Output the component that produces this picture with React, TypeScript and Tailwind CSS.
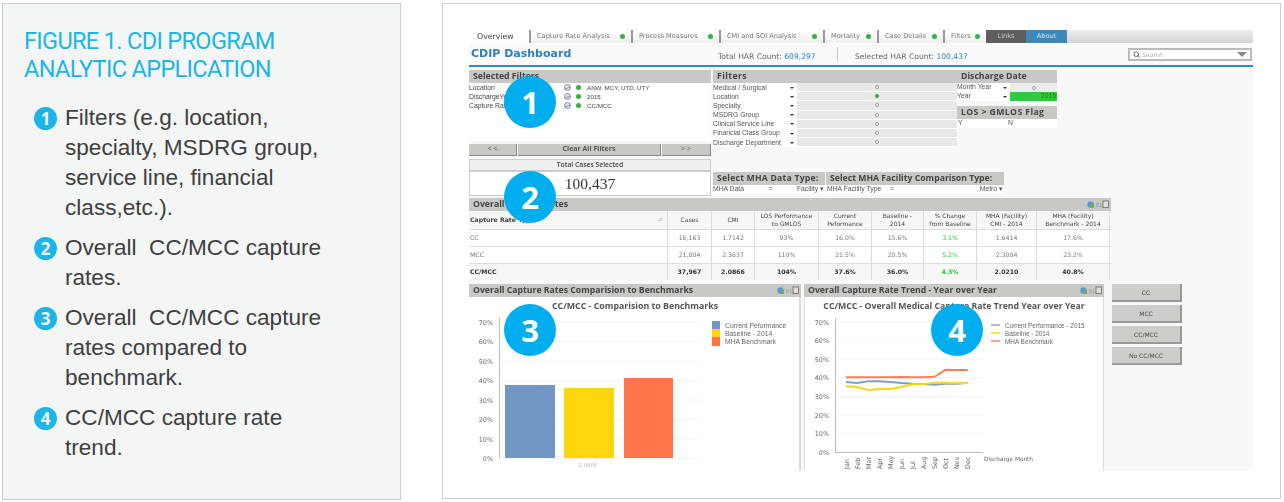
import { Search } from "lucide-react";

const notes = [
  { n: 1, lines: ["Filters (e.g. location,", "specialty, MSDRG group,", "service line, financial", "class,etc.)."] },
  { n: 2, lines: ["Overall\u00a0 CC/MCC capture", "rates."] },
  { n: 3, lines: ["Overall\u00a0 CC/MCC capture", "rates compared to", "benchmark."] },
  { n: 4, lines: ["CC/MCC capture rate", "trend."] },
];

const tabs = [
  { label: "Capture Rate Analysis", w: "w-[102px]" },
  { label: "Process Measures", w: "w-[88px]" },
  { label: "CMI and SOI Analysis", w: "w-[104px]" },
  { label: "Mortality", w: "w-[54px]" },
  { label: "Case Details", w: "w-[66px]" },
  { label: "Filters", w: "w-[43px]" },
];

const selected = [
  ["Location", "ANW, MCY, UTD, UTY"],
  ["DischargeYear", "2015"],
  ["Capture Rate Type", "CC/MCC"],
];

const filters = [
  "Medical / Surgical",
  "Location",
  "Specialty",
  "MSDRG Group",
  "Clinical Service Line",
  "Financial Class Group",
  "Discharge Department",
];

const head = [
  ["Cases"],
  ["CMI"],
  ["LOS Performance", "to GMLOS"],
  ["Current", "Peformance"],
  ["Baseline -", "2014"],
  ["% Change", "from Baseline"],
  ["MHA (Facility)", "CMI - 2014"],
  ["MHA (Facility)", "Benchmark - 2014"],
];

const rows = [
  ["CC", "16,163", "1.7142", "93%", "16.0%", "15.6%", "3.1%", "1.6414", "17.6%"],
  ["MCC", "21,804", "2.3637", "110%", "21.5%", "20.5%", "5.2%", "2.3084", "23.2%"],
  ["CC/MCC", "37,967", "2.0866", "104%", "37.6%", "36.0%", "4.3%", "2.0210", "40.8%"],
];

const months = ["Jan", "Feb", "Mar", "Apr", "May", "Jun", "Jul", "Aug", "Sep", "Oct", "Nov", "Dec"];

const trend = [
  { color: "#7f9fcb", ys: [306, 309, 304, 304, 306, 309, 311, 312, 314, 311, 311, 308] },
  { color: "#fdd60d", ys: [319, 321, 330, 327, 327, 321, 313, 312, 308, 308, 310, 309] },
  { color: "#ff7d52", ys: [292, 292, 292, 292, 292, 291, 292, 292, 290, 269, 270, 270] },
];

const linePoints = (ys: number[]) =>
  ys.map((y, i) => `${41 + i * 11.07},${(y / 3 + 280 - 297).toFixed(1)}`).join(" ");

function Badge({ n, className }: { n: number; className: string }) {
  return (
    <div
      className={`absolute flex h-[52px] w-[52px] items-center justify-center rounded-full bg-[#00aeef] font-['Open_Sans',sans-serif] text-[31px] font-bold text-white ${className}`}
    >
      {n}
    </div>
  );
}

function GreyHead({
  title,
  icons,
  className = "",
  textClass = "",
}: {
  title: string;
  icons?: boolean;
  className?: string;
  textClass?: string;
}) {
  return (
    <div className={`flex h-[13px] items-center justify-between bg-[#c8c8c7] pl-[4px] pr-[2px] ${className}`}>
      <span className={`font-['Open_Sans',sans-serif] text-[8.7px] font-bold whitespace-nowrap text-[#444] ${textClass}`}>{title}</span>
      {icons && <HeadIcons />}
    </div>
  );
}

function HeadIcons() {
  return (
    <svg width="22" height="9" viewBox="0 0 22 9" className="shrink-0">
      <circle cx="3.5" cy="4.5" r="3.2" fill="#5b9bd0" />
      <path d="M3 5l4-1 0 4-3 0z" fill="#6cb33f" />
      <text x="8.5" y="7" fontSize="6" fill="#999" fontFamily="Liberation Sans">XL</text>
      <rect x="16" y="1" width="5.5" height="6.5" fill="#ddd" stroke="#666" strokeWidth="0.8" />
    </svg>
  );
}

function Dot() {
  return <span className="h-[5px] w-[5px] shrink-0 rounded-full bg-[#2fb344]" />;
}

function Caret() {
  return <span className="h-0 w-0 border-x-[2px] border-t-[2px] border-x-transparent border-t-[#333]" />;
}

function TopBars() {
  return (
    <>
      <div className="flex h-[13px] items-stretch bg-gradient-to-b from-[#eeeeee] to-[#d4d4d4] font-['DejaVu_Sans',sans-serif] text-[6.6px] text-[#777]">
        <div className="flex w-[60px] items-center bg-white pl-[8px] text-[7.8px] text-[#444]">Overview</div>
        {tabs.map((t) => (
          <div
            key={t.label}
            className={`flex items-center justify-between border-l-2 border-[#999] bg-gradient-to-b from-white to-[#f0f0f0] pl-[6px] pr-[6px] ${t.w}`}
          >
            <span className="whitespace-nowrap">{t.label}</span>
            <Dot />
          </div>
        ))}
        <div className="flex w-[40px] items-center justify-center bg-[#5e5e5e] text-[#ccc]">Links</div>
        <div className="flex w-[41px] items-center justify-center bg-[#3c88bb] text-[#d8e8f2]">About</div>
      </div>
      <div className="flex h-[22px] items-center bg-[#fafafa] font-['DejaVu_Sans',sans-serif] text-[7.6px] text-[#666]">
        <span className="ml-[2px] w-[247px] pt-[1px] text-[11px] font-bold text-[#2c80bd]">CDIP Dashboard</span>
        <span className="w-[119px] pt-[5px] whitespace-nowrap">
          Total HAR Count: <span className="text-[#2c80bd]">609,297</span>
        </span>
        <span className="h-[14px] w-[18px] border-l border-[#ccc]" />
        <span className="w-[273px] pt-[5px] whitespace-nowrap">
          Selected HAR Count: <span className="text-[#2c80bd]">100,437</span>
        </span>
        <div className="flex h-[13px] w-[124px] items-center justify-between border-2 border-[#bbb] bg-white px-[3px] text-[6px] text-[#aaa] italic">
          <span className="flex items-center gap-[2px]">
            <Search size={7} strokeWidth={3} className="text-[#555]" />
            Search
          </span>
          <span className="h-0 w-0 border-x-[5px] border-t-[5px] border-x-transparent border-t-[#888]" />
        </div>
      </div>
      <div className="h-[2px] bg-[#2b8ccc]" />
    </>
  );
}

function LeftColumn() {
  return (
    <div className="flex w-[242px] flex-col">
      <GreyHead title="Selected Filters" />
      <div className="h-[58px] bg-white font-['Liberation_Sans',sans-serif] text-[6.8px] text-[#444]">
        {selected.map(([k, v]) => (
          <div key={k} className="flex h-[9.2px] items-center">
            <span className="w-[95px] whitespace-nowrap">{k}</span>
            <svg width="7" height="7" viewBox="0 0 7 7" className="mr-[5px]">
              <circle cx="3.5" cy="3.5" r="3" fill="#dfe7ef" stroke="#667" strokeWidth="0.7" />
              <path d="M1 5l5-2" stroke="#667" strokeWidth="0.7" />
            </svg>
            <Dot />
            <span className="ml-[6px] text-[6.2px] whitespace-nowrap">{v}</span>
          </div>
        ))}
      </div>
      <div className="mt-[3px] flex h-[12px] gap-[1px] font-['Open_Sans',sans-serif] text-[7px] text-[#555]">
        <div className="flex w-[48px] items-center justify-center border-r border-b border-[#888] bg-[#c8c8c7]">&lt; &lt;</div>
        <div className="flex w-[143px] items-center justify-center border-r border-b border-[#888] bg-[#c8c8c7] font-bold">Clear All Filters</div>
        <div className="flex w-[49px] items-center justify-center border-r border-b border-[#888] bg-[#c8c8c7]">&gt; &gt;</div>
      </div>
      <div className="mt-[3px] flex h-[12px] items-center justify-center border border-[#ccc] bg-[#f0f0f0] font-['Open_Sans',sans-serif] text-[6.8px] font-semibold text-[#444]">
        Total Cases Selected
      </div>
      <div className="flex h-[25px] items-center justify-center border border-[#ccc] bg-white font-['Liberation_Serif',serif] text-[15.5px] text-[#333]">
        100,437
      </div>
    </div>
  );
}

function FiltersColumn() {
  return (
    <div className="flex items-start">
      <div className="w-[244px]">
        <GreyHead title="Filters" textClass="tracking-[0.4px]" />
        <div className="font-['Liberation_Sans',sans-serif] text-[6.8px] text-[#555]">
          {filters.map((f, i) => (
            <div key={f} className="flex h-[9.2px] items-center">
              <div className="flex h-full w-[84px] items-center justify-between bg-white pr-[3px] whitespace-nowrap">
                {f}
                <Caret />
              </div>
              <div className="flex h-full flex-1 items-center justify-center border-b border-white bg-[#e8e8e8]">
                <span className={`h-[4px] w-[4px] rounded-full border ${i === 1 ? "border-[#2fb344] bg-[#2fb344]" : "border-[#999] bg-white"}`} />
              </div>
            </div>
          ))}
        </div>
      </div>
      <div className="w-[100px]">
        <GreyHead title="Discharge Date" />
        <div className="font-['Liberation_Sans',sans-serif] text-[6.8px] text-[#555]">
          <div className="flex h-[9px] items-center">
            <div className="flex h-full w-[53px] items-center justify-between bg-white pr-[3px]">
              Month Year
              <Caret />
            </div>
            <div className="flex h-full flex-1 items-center justify-center bg-[#ececec]">
              <span className="h-[4px] w-[4px] rounded-full border border-[#999] bg-white" />
            </div>
          </div>
          <div className="flex h-[9px] items-center">
            <div className="flex h-full w-[53px] items-center justify-between bg-white pr-[3px]">
              Year
              <Caret />
            </div>
            <div className="flex h-full flex-1 items-center justify-end bg-[#35c640] pr-[1px] text-[#1c7d28]">2015</div>
          </div>
        </div>
        <GreyHead title="LOS > GMLOS Flag" className="mt-[5px]" textClass="tracking-[0.4px]" />
        <div className="flex h-[9px] items-center bg-white font-['Liberation_Sans',sans-serif] text-[6.8px] text-[#555]">
          <span className="w-[51px] pl-[1px]">Y</span>
          <span>N</span>
        </div>
      </div>
    </div>
  );
}

function MhaSelects() {
  return (
    <div className="flex gap-[1px]">
      <div className="w-[112px]">
        <GreyHead title="Select MHA Data Type:" textClass="tracking-[0.2px]" />
        <div className="flex h-[9px] items-center justify-between bg-white pr-[1px] font-['Liberation_Sans',sans-serif] text-[6.8px] text-[#555]">
          <span>MHA Data</span>
          <span>=</span>
          <span>Facility ▾</span>
        </div>
      </div>
      <div className="w-[178px]">
        <GreyHead title="Select MHA Facility Comparison Type:" />
        <div className="flex h-[9px] items-center bg-white pr-[1px] font-['Liberation_Sans',sans-serif] text-[6.8px] text-[#555]">
          <span className="w-[48px] pl-[1px] whitespace-nowrap">MHA Facility Type</span>
          <span className="ml-[16px] flex-1">=</span>
          <span>Metro ▾</span>
        </div>
      </div>
    </div>
  );
}

function RatesTable() {
  const cols = "grid grid-cols-[199px_44px_43px_64px_53px_52px_53px_60px_73px]";
  return (
    <div className="mt-[2px] w-[642px] font-['DejaVu_Sans',sans-serif] text-[6.2px] text-[#555]">
      <GreyHead title="Overall Capture Rates" icons />
      <div className={`${cols} h-[18px] bg-[#f6f6f6]`}>
        <div className="flex items-center justify-between border-r border-[#ddd] pr-[5px] font-semibold whitespace-nowrap text-[#444]">
          <span className="pl-[1px]">Capture Rate Type</span>
          <span className="text-[5px] text-[#aaa]">⊿</span>
        </div>
        {head.map((h) => (
          <div key={h.join()} className="flex flex-col items-center justify-center border-r border-[#ddd] text-center text-[6px] leading-[8px] whitespace-nowrap text-[#444]">
            {h.map((l) => (
              <span key={l}>{l}</span>
            ))}
          </div>
        ))}
      </div>
      {rows.map((r, ri) => (
        <div key={r[0]} className={`${cols} h-[17px] border-t border-[#ddd] ${ri === 2 ? "bg-[#f6f6f6] font-bold text-[#333]" : "bg-white text-[#777]"}`}>
          {r.map((c, ci) => (
            <div
              key={ci}
              className={`flex items-center border-r border-[#ddd] ${ci === 0 ? "pl-[1px]" : "justify-center"} ${ci === 6 ? "text-[#2fbf3a]" : ""}`}
            >
              {c}
            </div>
          ))}
        </div>
      ))}
    </div>
  );
}

function BenchmarkChart() {
  const ticks = [70, 60, 50, 40, 30, 20, 10, 0];
  return (
    <svg width="330" height="174" viewBox="0 0 330 174" className="block" fontFamily="DejaVu Sans">
      <text x="166" y="12" textAnchor="middle" fontFamily="Open Sans" fontSize="8.8" fontWeight="700" fill="#555">
        CC/MCC - Comparision to Benchmarks
      </text>
      {ticks.map((t, i) => {
        const y = 25 + i * 19.5;
        return (
          <g key={t}>
            <line x1="30" x2="233" y1={y} y2={y} stroke="#e4e4e4" strokeWidth="0.8" strokeDasharray="1 1" />
            <text x="24" y={y + 2.5} textAnchor="end" fontSize="6.4" fill="#666">{t}%</text>
          </g>
        );
      })}
      <line x1="30.5" x2="30.5" y1="21" y2="161" stroke="#bbb" />
      <rect x="36" y="88" width="50" height="73" fill="#7397c4" />
      <rect x="95" y="91" width="50" height="70" fill="#fdd60d" />
      <rect x="155" y="81" width="49" height="80" fill="#ff7547" />
      <text x="119" y="170" textAnchor="middle" fontSize="5.5" fill="#bbb">2.0866</text>
      <rect x="243" y="24" width="8" height="8" fill="#7397c4" />
      <rect x="243" y="32" width="8" height="8" fill="#fdd60d" />
      <rect x="243" y="40" width="8" height="9" fill="#ff7547" />
      <g fontFamily="Liberation Sans" fontSize="6.8" fill="#666">
        <text x="256" y="31">Current Peformance</text>
        <text x="256" y="39">Baseline - 2014</text>
        <text x="256" y="47">MHA Benchmark</text>
      </g>
    </svg>
  );
}

function TrendChart() {
  const ticks = [70, 60, 50, 40, 30, 20, 10, 0];
  const legend = ["Current Performance - 2015", "Baseline - 2014", "MHA Benchmark"];
  return (
    <svg width="298" height="174" viewBox="0 0 298 174" className="block" fontFamily="DejaVu Sans">
      <text x="149" y="12" textAnchor="middle" fontFamily="Open Sans" fontSize="8.7" fontWeight="700" fill="#555">
        CC/MCC - Overall Medical Capture Rate Trend Year over Year
      </text>
      {ticks.map((t, i) => {
        const y = 25 + i * 18.6;
        return (
          <g key={t}>
            <line x1="31" x2="178" y1={y} y2={y} stroke="#e4e4e4" strokeWidth="0.8" strokeDasharray="1 1" />
            <text x="24" y={y + 2.5} textAnchor="end" fontSize="6.4" fill="#666">{t}%</text>
          </g>
        );
      })}
      <line x1="30.5" x2="30.5" y1="21" y2="155" stroke="#bbb" />
      <line x1="30" x2="178" y1="155.5" y2="155.5" stroke="#bbb" />
      {trend.map((l) => (
        <polyline key={l.color} points={linePoints(l.ys)} fill="none" stroke={l.color} strokeWidth="1.9" />
      ))}
      {months.map((m, i) => (
        <text key={m} transform={`translate(${43.5 + i * 11.07} 172) rotate(-90)`} fontSize="6.4" fill="#666">
          {m}
        </text>
      ))}
      <text x="179" y="164" fontSize="5.8" fill="#666">Discharge Month</text>
      {legend.map((l, i) => (
        <g key={l}>
          <line x1="186" x2="195" y1={28 + i * 8} y2={28 + i * 8} stroke={trend[i].color} strokeWidth="1.4" />
          <text x="200" y={30.5 + i * 8} fontSize="6.4" fontFamily="Liberation Sans" fill="#666">{l}</text>
        </g>
      ))}
    </svg>
  );
}

function Dashboard() {
  return (
    <div className="flex h-[441px] w-[784px] flex-col bg-[#f8f8f8] blur-[0.45px]">
      <TopBars />
      <div className="mt-[3px] flex gap-[2px]">
        <LeftColumn />
        <div className="flex flex-col">
          <div className="h-[102px]">
            <FiltersColumn />
          </div>
          <MhaSelects />
        </div>
      </div>
      <RatesTable />
      <div className="mt-[4px] flex">
        <div className="w-[332px] bg-[#d8d8d8]">
          <GreyHead title="Overall Capture Rates Comparision to Benchmarks" icons />
          <div className="border-r-2 border-[#ddd] bg-white">
            <BenchmarkChart />
          </div>
        </div>
        <div className="ml-[3px] w-[300px]">
          <GreyHead title="Overall Capture Rate Trend - Year over Year" icons />
          <div className="border-x border-[#ddd] bg-white">
            <TrendChart />
          </div>
        </div>
        <div className="ml-[8px] flex w-[70px] flex-col gap-[3px] font-['DejaVu_Sans',sans-serif] text-[6px] text-[#444]">
          {["CC", "MCC", "CC/MCC", "No CC/MCC"].map((b) => (
            <div key={b} className="flex h-[18px] items-center justify-center border-r-2 border-b-2 border-[#999] bg-[#cdcdcc]">
              {b}
            </div>
          ))}
        </div>
      </div>
    </div>
  );
}

export default function App() {
  return (
    <div className="flex h-[502px] w-[1284px] items-start gap-[41px] bg-white pt-[3px] pl-[2px]">
      <aside className="h-[497px] w-[399px] shrink-0 border border-[#cccccc] bg-[#f4f6f6] pt-[23px] pl-[21px]">
        <h1 className="font-['Roboto',sans-serif] text-[23.5px] leading-[28px] font-normal tracking-[-0.65px] text-[#1cb5ea]">
          FIGURE 1. CDI PROGRAM
          <br />
          ANALYTIC APPLICATION
        </h1>
        <div className="mt-[20px] flex flex-col gap-[10px] pl-[10px] font-['Liberation_Sans',sans-serif] text-[22.6px] leading-[30px] text-[#404040]">
          {notes.map((note) => (
            <div key={note.n} className="flex">
              <span className="mt-[4px] mr-[8px] flex h-[23px] w-[23px] shrink-0 items-center justify-center rounded-full bg-[#1cb5ea] font-['Open_Sans',sans-serif] text-[17px] leading-none font-bold text-[#f4f6f6]">
                {note.n}
              </span>
              <div className="whitespace-nowrap">
                {note.lines.map((l) => (
                  <div key={l}>{l}</div>
                ))}
              </div>
            </div>
          ))}
        </div>
      </aside>
      <section className="relative h-[496px] w-[839px] shrink-0 border border-[#cccccc] bg-white pt-[26px] pl-[26px]">
        <Dashboard />
        <Badge n={1} className="top-[72px] left-[61px]" />
        <Badge n={2} className="top-[167px] left-[61px]" />
        <Badge n={3} className="top-[300px] left-[61px]" />
        <Badge n={4} className="top-[300px] left-[488px]" />
      </section>
    </div>
  );
}
